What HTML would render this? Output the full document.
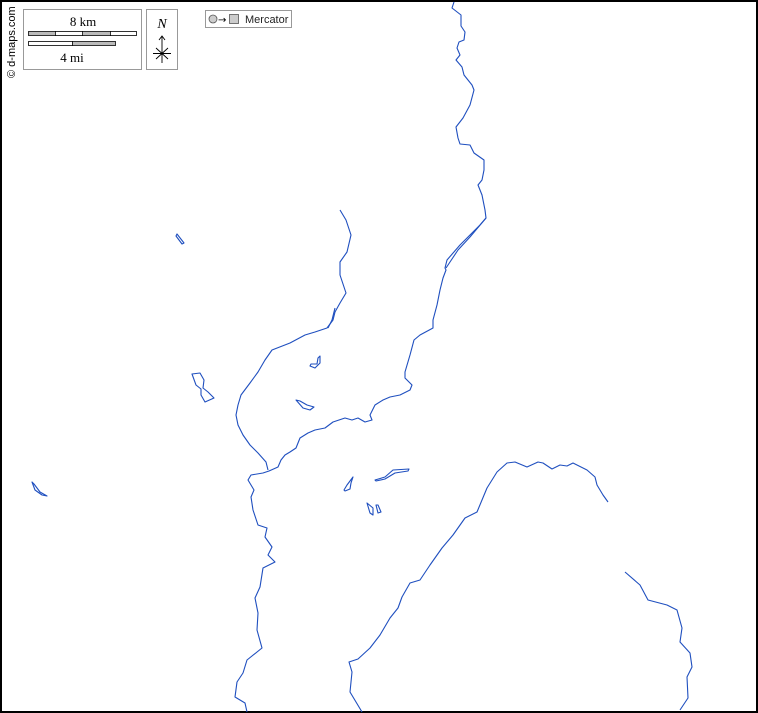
<!DOCTYPE html>
<html><head><meta charset="utf-8"><style>
html,body{margin:0;padding:0;background:#fff}
#m{position:relative;width:758px;height:713px;overflow:hidden;background:#fff}
svg{position:absolute;left:0;top:0}
</style></head><body><div id="m">
<svg width="758" height="713" viewBox="0 0 758 713">
<rect x="1" y="1" width="756" height="711" fill="#fff" stroke="#000" stroke-width="2"/>
<g fill="none" stroke="#1f4fbf" stroke-width="1.1" stroke-linejoin="round">
<polyline points="454,2 452,8 461,15 461,26 465,32 464,40 459,42 457,48 460,55 456,60 462,67 464,75 472,85 474,90 470,105 463,118 456,127 458,138 460,144 470,145 474,153 484,160 484,170 482,180 478,185 482,195 485,210 486,218 480,225 470,235 460,245 447,260 445,268 446,270 443,278 440,290 437,305 433,320 433,328 420,335 414,340 410,355 405,372 405,378 412,385 410,390 400,395 390,397 383,400 375,405 370,415 372,420 365,422 358,418 352,420 345,418 333,422 325,428 315,430 308,433 300,438 296,448 290,452 285,455 281,460 278,467 269,471 263,473 251,475 248,480 254,490 251,497 253,510 258,525 267,528 265,537 272,547 268,555 275,562 263,568 260,587 255,598 258,613 257,630 262,648 247,660 243,673 237,682 235,697 245,703 247,712"/>
<polyline points="486,218 470,237 458,250 450,262 446,268"/>
<polyline points="340,210 346,220 351,235 347,252 340,262 340,275 346,293 340,303 335,312 333,320 327,328 315,332 305,335 290,343 272,350 265,360 258,372 250,383 241,395 238,405 236,415 238,425 243,435 250,445 258,453 266,462 268,470"/>
<polyline points="335,308 332,320 328,328"/>
<polyline points="362,712 350,692 352,672 349,662 358,659 370,648 380,635 390,618 398,608 402,597 410,583 420,580 430,565 442,548 453,535 465,518 477,512 487,488 497,472 507,463 515,462 527,467 538,462 543,463 552,469 560,465 567,466 573,463 587,470 595,477 597,485 603,495 608,502"/>
<polyline points="625,572 640,585 648,600 667,605 677,610 682,628 680,642 690,653 692,667 687,677 688,698 680,710"/>
<path d="M177,234 L184,243 L182,244 L176,236 Z"/>
<path d="M192,374 L200,373 L204,380 L203,388 L208,392 L214,398 L205,402 L201,395 L201,389 L196,385 Z"/>
<path d="M32,482 L35,490 L42,495 L47,496 L40,492 L34,484 Z"/>
<path d="M310,366 L315,368 L320,363 L320,356 L318,358 L317,364 L311,364 Z"/>
<path d="M296,400 L303,408 L310,410 L314,407 L307,405 L300,401 Z"/>
<path d="M344,490 L347,485 L353,477 L351,483 L350,489 L345,491 Z"/>
<path d="M375,480 L385,477 L393,470 L409,469 L408,471 L395,473 L385,479 L376,481 Z"/>
<path d="M367,503 L370,513 L373,515 L373,508 Z M376,505 L378,513 L381,512 L378,505 Z"/>
</g>
<text transform="translate(15,78) rotate(-90)" font-family="Liberation Sans, sans-serif" font-size="11" fill="#000">© d-maps.com</text>
<rect x="23.5" y="9.5" width="118" height="60" fill="#fff" stroke="#999"/>
<text x="83" y="26" text-anchor="middle" font-family="Liberation Serif, serif" font-size="13">8 km</text>
<rect x="28.5" y="31.5" width="108" height="4" fill="#fff" stroke="#000" stroke-width="0.8"/>
<rect x="29" y="32" width="26" height="3" fill="#bbb"/><rect x="83" y="32" width="27" height="3" fill="#bbb"/>
<line x1="55.5" y1="31" x2="55.5" y2="36" stroke="#000" stroke-width="0.8"/><line x1="82.5" y1="31" x2="82.5" y2="36" stroke="#000" stroke-width="0.8"/><line x1="110.5" y1="31" x2="110.5" y2="36" stroke="#000" stroke-width="0.8"/>
<rect x="28.5" y="41.5" width="87" height="4" fill="#fff" stroke="#000" stroke-width="0.8"/>
<rect x="72" y="42" width="43" height="3" fill="#bbb"/><line x1="72.5" y1="41" x2="72.5" y2="46" stroke="#000" stroke-width="0.8"/>
<text x="72" y="62" text-anchor="middle" font-family="Liberation Serif, serif" font-size="13">4 mi</text>
<rect x="146.5" y="9.5" width="31" height="60" fill="#fff" stroke="#999"/>
<text x="162" y="28" text-anchor="middle" font-family="Liberation Serif, serif" font-style="italic" font-size="14">N</text>
<g stroke="#000" stroke-width="0.9" fill="none"><line x1="162" y1="36" x2="162" y2="63"/><polyline points="159,40 162,36 165,40"/><line x1="153" y1="53.5" x2="171" y2="53.5"/><line x1="156" y1="48" x2="168" y2="59"/><line x1="168" y1="48" x2="156" y2="59"/></g>
<rect x="205.5" y="10.5" width="86" height="17" fill="#fff" stroke="#999"/>
<circle cx="213" cy="19" r="4" fill="#ccc" stroke="#555" stroke-width="0.8"/>
<text x="218" y="23" font-family="DejaVu Sans, sans-serif" font-size="10">→</text>
<rect x="229.5" y="14.5" width="9" height="9" fill="#ccc" stroke="#555" stroke-width="0.8"/>
<text x="245" y="23" font-family="Liberation Sans, sans-serif" font-size="11" fill="#222">Mercator</text>
</svg>
</div></body></html>
